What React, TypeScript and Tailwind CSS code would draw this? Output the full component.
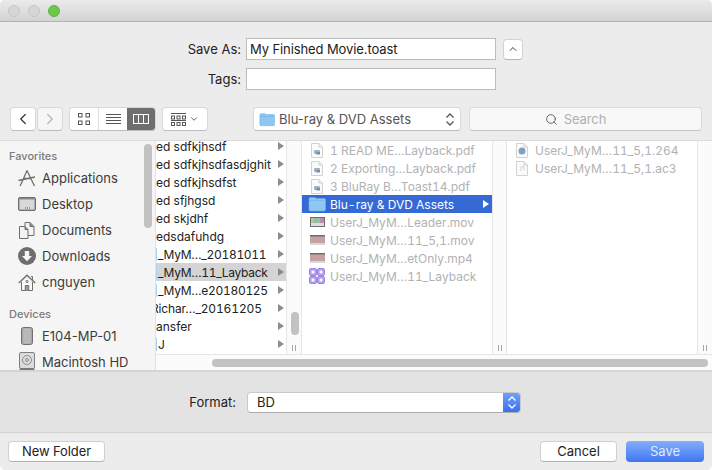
import { ChevronLeft, ChevronRight, ChevronDown, ChevronUp, Search } from 'lucide-react';

function UpDown({ color }: { color: string }) {
  return (
    <svg viewBox="0 0 10 15" className="w-[10px] h-[15px]" fill="none" stroke={color} strokeWidth="1.300">
      <path d="M1.500 5.500 5 2l3.500 3.500M1.500 9.500 5 13l3.500-3.500" />
    </svg>
  );
}

function FolderIcon({ className }: { className?: string }) {
  return (
    <svg viewBox="0 0 18 16" className={className}>
      <path d="M1 3.200C1 2 1.700 1.500 2.600 1.500h4c.8 0 1.100.9 2 .9h7.400c1 0 1.500.6 1.500 1.500v9.600c0 .9-.6 1.500-1.500 1.500H2.500C1.600 15 1 14.400 1 13.500z" fill="#8ec7f2" stroke="#6fb1e4" strokeWidth="0.600" />
      <path d="M1 4.500h16.500" stroke="#6fb1e4" strokeWidth="0.600" />
    </svg>
  );
}

function AppsIcon() {
  return (
    <svg viewBox="0 0 20 18" className="w-5 h-[18px]" fill="none" stroke="#6f6f6f" strokeWidth="1.300">
      <path d="M10 1.500 5 13M10 1.500 16 14M1.500 11.500 18 8M6.500 9.500h7.500" />
      <path d="M5 13l-2 4M16 14l1.500 3" />
    </svg>
  );
}

function DesktopIcon() {
  return (
    <svg viewBox="0 0 18 14" className="w-[18px] h-[14px]">
      <rect x="0.500" y="0.500" width="17" height="13" rx="1.500" fill="#8b8b8b" stroke="#6f6f6f" />
      <rect x="1.500" y="2.500" width="15" height="10" fill="#d8d8d8" />
      <path d="M7 11h1M9 11h1M11 11h1" stroke="#555" />
    </svg>
  );
}

function DocumentsIcon() {
  return (
    <svg viewBox="0 0 18 18" className="w-[18px] h-[18px]" fill="#f3f3f3" stroke="#6f6f6f">
      <path d="M7 1.500h5l4 4v9H7z" />
      <path d="M12 1.500v4h4" fill="#8a8a8a" />
      <path d="M1.500 5.500H7l3 3v9H1.500z" />
      <path d="M7 5.500v3h3" fill="#8a8a8a" />
    </svg>
  );
}

function DownloadsIcon() {
  return (
    <svg viewBox="0 0 18 18" className="w-[18px] h-[18px]">
      <circle cx="9" cy="9" r="9" fill="#6e6e6e" />
      <path d="M6.800 4h4.400v5h2.800L9 14.200 4 9h2.800z" fill="#f5f5f5" />
    </svg>
  );
}

function HomeIcon() {
  return (
    <svg viewBox="0 0 18 17" className="w-[18px] h-[17px]" fill="none" stroke="#6f6f6f">
      <path d="M3.500 8v8.500h11V8" fill="#f8f8f8" />
      <path d="M.800 9 9 1.200 17.200 9" strokeWidth="1.400" />
      <path d="M13 2.500h1.500v4" />
      <path d="M7.300 16.500v-5h3.400v5" fill="#9a9a9a" />
      <circle cx="9" cy="7.500" r="1.100" />
    </svg>
  );
}

function DiskIcon() {
  return (
    <svg viewBox="0 0 12 18" className="w-3 h-[18px]">
      <rect x="0.500" y="0.500" width="11" height="17" rx="2" fill="#a8a8a8" stroke="#6f6f6f" />
      <rect x="2.500" y="1.500" width="7" height="15" fill="#b9b9b9" />
    </svg>
  );
}

function HdIcon() {
  return (
    <svg viewBox="0 0 16 20" className="w-4 h-5">
      <rect x="0.500" y="0.500" width="15" height="16" rx="1.500" fill="#dcdcdc" stroke="#808080" />
      <circle cx="8" cy="8" r="4.500" fill="none" stroke="#8f8f8f" />
      <circle cx="8" cy="8" r="1.500" fill="none" stroke="#8f8f8f" />
      <rect x="0.500" y="16.500" width="15" height="3" fill="#777" />
    </svg>
  );
}

function DocIcon({ children }: { children?: React.ReactNode }) {
  return (
    <svg viewBox="0 0 12 15" className="w-3 h-[15px]">
      <path d="M.500.500h7.500l3.500 3.500v10.500H.500z" fill="#fbfbfb" stroke="#d2d2d2" />
      <path d="M8 .500V4h3.500" fill="#eee" stroke="#d2d2d2" />
      {children}
    </svg>
  );
}

function PdfIcon() {
  return (
    <DocIcon>
      <rect x="3" y="7" width="6" height="4" rx="1" fill="#a3b1c4" />
      <rect x="5.500" y="9" width="3.500" height="2.500" fill="#7d8ba0" />
    </DocIcon>
  );
}

function MovieIcon({ leader }: { leader?: boolean }) {
  return (
    <svg viewBox="0 0 15 10" className="w-[15px] h-[10px] opacity-80">
      <rect width="15" height="10" fill="#4a4a4a" />
      {leader ? (
        <>
          <rect x="1" y="1" width="3" height="5" fill="#b7b06b" />
          <rect x="4" y="1" width="3" height="5" fill="#6fa9a6" />
          <rect x="7" y="1" width="3" height="5" fill="#8cae75" />
          <rect x="10" y="1" width="4" height="5" fill="#a7739c" />
          <rect x="1" y="6" width="13" height="3" fill="#d5d5d5" />
        </>
      ) : (
        <>
          <rect y="1.500" width="15" height="6.500" fill="#b98a8c" />
          <rect y="8" width="15" height="2" fill="#cfcfcf" />
        </>
      )}
    </svg>
  );
}

function ToastIcon() {
  return (
    <svg viewBox="0 0 16 16" className="w-4 h-4">
      <rect x="0.500" y="0.500" width="7" height="7" rx="1.500" fill="#b9a3ee" stroke="#9d84e2" />
      <rect x="8.500" y="0.500" width="7" height="7" rx="1.500" fill="#b9a3ee" stroke="#9d84e2" />
      <rect x="0.500" y="8.500" width="7" height="7" rx="1.500" fill="#b9a3ee" stroke="#9d84e2" />
      <rect x="8.500" y="8.500" width="7" height="7" rx="1.500" fill="#b9a3ee" stroke="#9d84e2" />
      <circle cx="4" cy="4" r="1.500" fill="#fff" />
      <circle cx="12" cy="4" r="1.500" fill="#fff" />
      <circle cx="4" cy="12" r="1.500" fill="#fff" />
      <circle cx="12" cy="12" r="1.500" fill="#fff" />
    </svg>
  );
}

function Arrow({ white }: { white?: boolean }) {
  return (
    <svg viewBox="0 0 6 8" className={white ? 'w-[6px] h-2 fill-white' : 'w-[6px] h-2 fill-[#8c8c8c]'}>
      <path d="M0 0l6 4-6 4z" />
    </svg>
  );
}

function GridIcon() {
  return (
    <svg viewBox="0 0 14 14" className="w-[14px] h-[14px]" fill="none" stroke="#555">
      <rect x="1.500" y="1.500" width="3.500" height="3.500" />
      <rect x="9" y="1.500" width="3.500" height="3.500" />
      <rect x="1.500" y="9" width="3.500" height="3.500" />
      <rect x="9" y="9" width="3.500" height="3.500" />
    </svg>
  );
}

function ListIcon() {
  return (
    <svg viewBox="0 0 15 12" className="w-[15px] h-3" stroke="#555">
      <path d="M0 1.500h15M0 4.500h15M0 7.500h15M0 10.500h15" />
    </svg>
  );
}

function ColumnsIcon() {
  return (
    <svg viewBox="0 0 16 10" className="w-4 h-[10px]" fill="none" stroke="#fff">
      <rect x="0.500" y="0.500" width="15" height="9" />
      <path d="M5.500 0v10M10.500 0v10" />
    </svg>
  );
}

function ArrangeIcon() {
  return (
    <svg viewBox="0 0 15 13" className="w-[15px] h-[13px]" fill="none" stroke="#555">
      <path d="M0 .500h15" />
      <rect x="0.500" y="3" width="3" height="3" />
      <rect x="6" y="3" width="3" height="3" />
      <rect x="11.500" y="3" width="3" height="3" />
      <path d="M0 7.500h15" />
      <rect x="0.500" y="9.500" width="3" height="3" />
      <rect x="6" y="9.500" width="3" height="3" />
      <rect x="11.500" y="9.500" width="3" height="3" />
    </svg>
  );
}

function ColumnHandle() {
  return (
    <div className="mt-auto mb-[3px] flex justify-center gap-[2px]">
      <div className="w-px h-[6px] bg-[#a8a8a8]" />
      <div className="w-px h-[6px] bg-[#a8a8a8]" />
    </div>
  );
}

const favorites = [
  { label: 'Applications', icon: <AppsIcon /> },
  { label: 'Desktop', icon: <DesktopIcon /> },
  { label: 'Documents', icon: <DocumentsIcon /> },
  { label: 'Downloads', icon: <DownloadsIcon /> },
  { label: 'cnguyen', icon: <HomeIcon /> },
];

const devices = [
  { label: 'E104-MP-01', icon: <DiskIcon /> },
  { label: 'Macintosh HD', icon: <HdIcon /> },
];

const firstColumn = [
  { label: 'ed sdfkjhsdf' },
  { label: 'ed sdfkjhsdfasdjghit' },
  { label: 'ed sdfkjhsdfst' },
  { label: 'ed sfjhgsd' },
  { label: 'ed skjdhf' },
  { label: 'edsdafuhdg' },
  { label: '_MyM…_20181011', tab: true },
  { label: '_MyM…11_Layback', tab: true, selected: true },
  { label: '_MyM…e20180125', tab: true },
  { label: 'Richar…_20161205', cut: true },
  { label: 'ansfer' },
  { label: 'J', tab: true },
];

const secondColumn = [
  { label: '1 READ ME…Layback.pdf', icon: <PdfIcon /> },
  { label: '2 Exporting…Layback.pdf', icon: <PdfIcon /> },
  { label: '3 BluRay B…Toast14.pdf', icon: <PdfIcon /> },
  { label: 'Blu-ray & DVD Assets', icon: <FolderIcon className="w-[18px] h-4" />, selected: true },
  { label: 'UserJ_MyM…Leader.mov', icon: <MovieIcon leader /> },
  { label: 'UserJ_MyM…11_5,1.mov', icon: <MovieIcon /> },
  { label: 'UserJ_MyM…etOnly.mp4', icon: <MovieIcon /> },
  { label: 'UserJ_MyM…11_Layback', icon: <ToastIcon /> },
];

const thirdColumn = [
  {
    label: 'UserJ_MyM…11_5,1.264',
    icon: (
      <DocIcon>
        <circle cx="6" cy="8" r="3.500" fill="#7f9fc4" />
      </DocIcon>
    ),
  },
  {
    label: 'UserJ_MyM…11_5,1.ac3',
    icon: (
      <DocIcon>
        <path d="M5 10V6l3-.8v4" fill="none" stroke="#d0d0d0" />
      </DocIcon>
    ),
  },
];

export default function App() {
  return (
    <div className="relative w-[712px] h-[470px] flex flex-col overflow-hidden rounded-[5px] bg-[#ececec] font-['Inter','Liberation_Sans',sans-serif] text-[13px] text-[#222]">
      {/* Title bar */}
      <div className="h-[22px] shrink-0 flex items-center gap-2 pl-2 border-b border-[#b4b4b4] bg-gradient-to-b from-[#ebebeb] to-[#d3d3d3]">
        <div className="w-3 h-3 rounded-full bg-[#d6d6d6] border border-[#c4c4c4]" />
        <div className="w-3 h-3 rounded-full bg-[#d6d6d6] border border-[#c4c4c4]" />
        <div className="w-3 h-3 rounded-full bg-[#6cc84a] border border-[#5cb53d]" />
      </div>

      {/* Name and tags */}
      <div className="h-[119px] shrink-0 flex flex-col border-b border-[#dcdcdc]">
        <div className="mt-4 flex items-center h-[22px]">
          <div className="w-[241px] pt-px text-right">Save As:</div>
          <div className="ml-[5px] w-[250px] h-[22px] flex items-center pt-px px-[3px] bg-white border border-[#bdbdbd] text-[#1c1c1c] tracking-[-0.1px]">My Finished Movie.toast</div>
          <button className="ml-[7px] w-5 h-[21px] flex items-center justify-center bg-white rounded-[4px] border border-[#d2d2d2] border-b-[#b5b5b5]">
            <ChevronUp size={12} strokeWidth={2} color="#444" />
          </button>
        </div>
        <div className="mt-2 flex items-center h-[22px]">
          <div className="w-[241px] pt-px text-right">Tags:</div>
          <div className="ml-[5px] w-[250px] h-[22px] bg-white border border-[#bdbdbd]" />
        </div>

        {/* Toolbar */}
        <div className="mt-[17px] ml-[10px] flex items-center h-6">
          <div className="flex gap-px">
            <button className="w-[26px] h-6 flex items-center justify-center bg-white rounded-[4px] border border-[#d8d8d8] border-b-[#bcbcbc]">
              <ChevronLeft size={18} strokeWidth={1.6} color="#333" />
            </button>
            <button className="w-[26px] h-6 flex items-center justify-center bg-[#f6f6f6] rounded-[4px] border border-[#d8d8d8] border-b-[#bcbcbc]">
              <ChevronRight size={18} strokeWidth={1.6} color="#b5b5b5" />
            </button>
          </div>
          <div className="ml-[6px] w-[87px] h-6 flex overflow-hidden bg-white rounded-[4px] border border-[#d8d8d8] border-b-[#bcbcbc]">
            <div className="w-[29px] flex items-center justify-center border-r border-[#dedede]">
              <GridIcon />
            </div>
            <div className="w-[28px] flex items-center justify-center">
              <ListIcon />
            </div>
            <div className="flex-1 flex items-center justify-center bg-[#6e6e6e]">
              <ColumnsIcon />
            </div>
          </div>
          <button className="ml-[6px] w-[46px] h-6 flex items-center justify-center gap-[3px] bg-white rounded-[4px] border border-[#d8d8d8] border-b-[#bcbcbc]">
            <ArrangeIcon />
            <ChevronDown size={10} strokeWidth={2.2} color="#555" />
          </button>
          <button className="ml-[45px] w-[208px] h-6 flex items-center pl-[5px] pr-[5px] bg-white rounded-[4px] border border-[#d8d8d8] border-b-[#bcbcbc] text-[#555]">
            <FolderIcon className="w-[16px] h-[15px]" />
            <span className="ml-[4px] pt-px">Blu-ray &amp; DVD Assets</span>
            <div className="ml-auto flex"><UpDown color="#555" /></div>
          </button>
          <div className="ml-2 w-[233px] h-6 flex items-center justify-center gap-[6px] pr-5 bg-[#f8f8f8] rounded-[4px] border border-[#dcdcdc] border-b-[#c4c4c4] text-[#b0b0b0]">
            <Search size={13} strokeWidth={1.6} color="#555" />
            <span className="pt-px tracking-[-0.1px]">Search</span>
          </div>
        </div>
      </div>

      {/* File browser */}
      <div className="h-[231px] shrink-0 flex bg-white border-b-2 border-[#d4d4d4]">
        <div className="relative w-[156px] shrink-0 overflow-hidden bg-[#f5f5f5] border-r border-[#e2e2e2] text-[#3c3c3c]">
          <div className="h-6 pt-[6px] pl-[9px] flex items-center text-[11px] font-medium text-[#7b7b7b]">Favorites</div>
          {favorites.map((item) => (
            <div key={item.label} className="h-[26px] flex items-center">
              <div className="w-[20px] ml-[17px] flex justify-center">{item.icon}</div>
              <span className="ml-[5px] pt-px">{item.label}</span>
            </div>
          ))}
          <div className="h-7 pt-[10px] pl-[9px] flex items-center text-[11px] font-medium text-[#7b7b7b]">Devices</div>
          {devices.map((item) => (
            <div key={item.label} className="h-[26px] flex items-center">
              <div className="w-[20px] ml-[17px] flex justify-center">{item.icon}</div>
              <span className="ml-[5px] pt-px">{item.label}</span>
            </div>
          ))}
          <div className="absolute left-[144px] top-[3px] w-2 h-[84px] rounded-full bg-[#c2c2c2]" />
        </div>

        <div className="flex-1 min-w-0 flex flex-col text-[12px] tabular-nums">
          <div className="h-[214px] flex border-b border-[#e6e6e6]">
            <div className="w-[131px] shrink-0 overflow-hidden border-r border-[#e6e6e6]">
              <div className="-mt-[4px]">
                {firstColumn.map((row) => (
                  <div key={row.label} className={row.selected ? 'h-[18px] flex items-center pr-[2px] bg-[#d4d4d4]' : 'h-[18px] flex items-center pr-[2px]'}>
                    {row.tab && <div className="w-px h-[13px] mr-px bg-[#a9d3f4]" />}
                    <span className={row.cut ? '-ml-[5px] pt-px whitespace-nowrap tracking-[-0.15px]' : row.tab ? 'pt-px whitespace-nowrap tracking-[-0.3px]' : 'pt-px whitespace-nowrap'}>{row.label}</span>
                    <div className="ml-auto"><Arrow /></div>
                  </div>
                ))}
              </div>
            </div>
            <div className="relative w-[15px] shrink-0 flex flex-col bg-[#fbfbfb] border-r border-[#e6e6e6]">
              <div className="absolute left-[4px] top-[171px] w-2 h-[23px] rounded-full bg-[#c2c2c2]" />
              <ColumnHandle />
            </div>
            <div className="w-[190px] shrink-0">
              {secondColumn.map((row) => (
                <div key={row.label} className={row.selected ? 'h-[18px] flex items-center pr-[3px] bg-[#3569d6] text-white' : 'h-[18px] flex items-center pr-[3px] text-[#b2b2b2]'}>
                  <div className="w-[18px] ml-[6px] flex justify-center">{row.icon}</div>
                  <span className="ml-[4px] pt-px whitespace-nowrap">{row.label}</span>
                  {row.selected && <div className="ml-auto"><Arrow white /></div>}
                </div>
              ))}
            </div>
            <div className="w-[15px] shrink-0 flex flex-col bg-[#fbfbfb] border-x border-[#e6e6e6]">
              <ColumnHandle />
            </div>
            <div className="w-[190px] shrink-0">
              {thirdColumn.map((row) => (
                <div key={row.label} className="h-[18px] flex items-center text-[#b2b2b2]">
                  <div className="w-[18px] ml-[6px] flex justify-center">{row.icon}</div>
                  <span className="ml-[4px] pt-px whitespace-nowrap">{row.label}</span>
                </div>
              ))}
            </div>
            <div className="flex-1 flex flex-col bg-[#fbfbfb] border-l border-[#e6e6e6]">
              <ColumnHandle />
            </div>
          </div>
          <div className="flex-1 flex items-center pl-[56px] pr-[4px] bg-[#fbfbfb]">
            <div className="w-full h-2 rounded-full bg-[#c2c2c2]" />
          </div>
        </div>
      </div>

      {/* Format */}
      <div className="h-[61px] shrink-0 flex items-center bg-[#e3e3e3] border-b border-[#d2d2d2]">
        <div className="w-[236px] pt-px text-right">Format:</div>
        <div className="ml-[11px] w-[274px] h-[21px] flex items-center rounded-[4px] overflow-hidden bg-white border border-[#c9c9c9] border-b-[#adadad]">
          <span className="ml-[9px] pt-px flex-1">BD</span>
          <div className="w-[17px] h-full flex items-center justify-center bg-gradient-to-b from-[#6fa0fa] to-[#3a70ef]">
            <UpDown color="#fff" />
          </div>
        </div>
      </div>

      {/* Buttons */}
      <div className="flex-1 flex items-center pl-2 pr-2">
        <button className="w-[97px] h-[21px] flex items-center justify-center bg-white rounded-[4px] border border-[#d0d0d0] border-b-[#b3b3b3] tracking-[-0.1px]">New Folder</button>
        <button className="ml-auto w-[77px] h-[21px] flex items-center justify-center bg-white rounded-[4px] border border-[#d0d0d0] border-b-[#b3b3b3]">Cancel</button>
        <button className="ml-[9px] w-[78px] h-[21px] flex items-center justify-center rounded-[4px] bg-gradient-to-b from-[#84adfa] to-[#3f76f2] text-[#dfe9fd]">Save</button>
      </div>
    </div>
  );
}
